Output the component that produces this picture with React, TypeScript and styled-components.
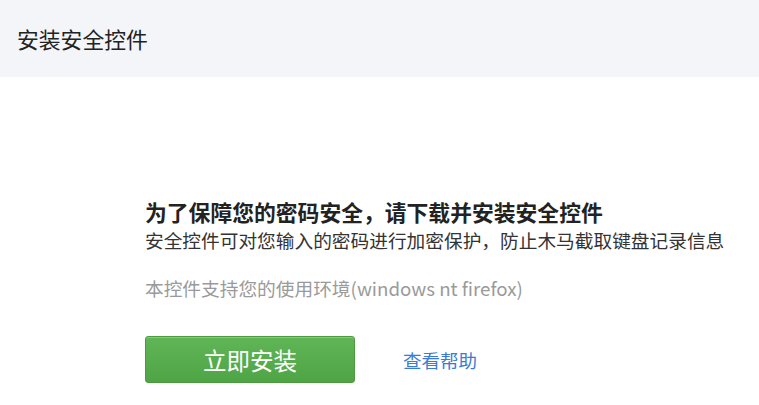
import React from 'react';
import styled, { createGlobalStyle } from 'styled-components';

const GlobalStyle = createGlobalStyle`
  html, body {
    margin: 0;
    padding: 0;
    background: #ffffff;
    font-family: "Microsoft YaHei", "Noto Sans CJK SC", "Noto Sans", sans-serif;
  }
`;

const Page = styled.div`
  width: 759px;
  height: 405px;
  overflow: hidden;
  background: #ffffff;
`;

const Header = styled.div`
  height: 77px;
  background: #f4f5f9;
  display: flex;
  align-items: center;
  padding-left: 17px;
`;

const Title = styled.h1`
  margin: 0;
  font-size: 21.8px;
  line-height: 28px;
  font-weight: normal;
  color: #222222;
`;

const Content = styled.div`
  padding: 121px 0 0 145px;
  display: flex;
  flex-direction: column;
`;

const Headline = styled.p`
  margin: 0;
  font-size: 21.8px;
  line-height: 28px;
  font-weight: bold;
  color: #222222;
`;

const Desc = styled.p<{ $muted?: boolean; $gap?: number }>`
  margin: ${(p) => p.$gap ?? 0}px 0 0;
  font-size: 18.7px;
  line-height: 28px;
  color: ${(p) => (p.$muted ? '#9a9a9a' : '#333333')};
  white-space: nowrap;
`;

const Actions = styled.div`
  margin-top: 34px;
  display: flex;
  align-items: center;
`;

const InstallButton = styled.button`
  width: 210px;
  height: 47px;
  box-sizing: border-box;
  border: 1px solid #4b9b3e;
  border-radius: 3px;
  background: linear-gradient(#60b656, #4fa546);
  box-shadow: inset 0 1px 0 rgba(255, 255, 255, 0.25);
  color: #ffffff;
  font-family: inherit;
  font-size: 23.5px;
  padding: 0;
  cursor: pointer;
`;

const HelpLink = styled.a`
  margin-left: 48px;
  font-size: 18.5px;
  color: #3a7bd5;
  text-decoration: none;
  cursor: pointer;
`;

export default function App() {
  return (
    <Page>
      <GlobalStyle />
      <Header>
        <Title>安装安全控件</Title>
      </Header>
      <Content>
        <Headline>为了保障您的密码安全，请下载并安装安全控件</Headline>
        <Desc>安全控件可对您输入的密码进行加密保护，防止木马截取键盘记录信息</Desc>
        <Desc $muted $gap={20}>本控件支持您的使用环境(windows nt firefox)</Desc>
        <Actions>
          <InstallButton>立即安装</InstallButton>
          <HelpLink>查看帮助</HelpLink>
        </Actions>
      </Content>
    </Page>
  );
}
